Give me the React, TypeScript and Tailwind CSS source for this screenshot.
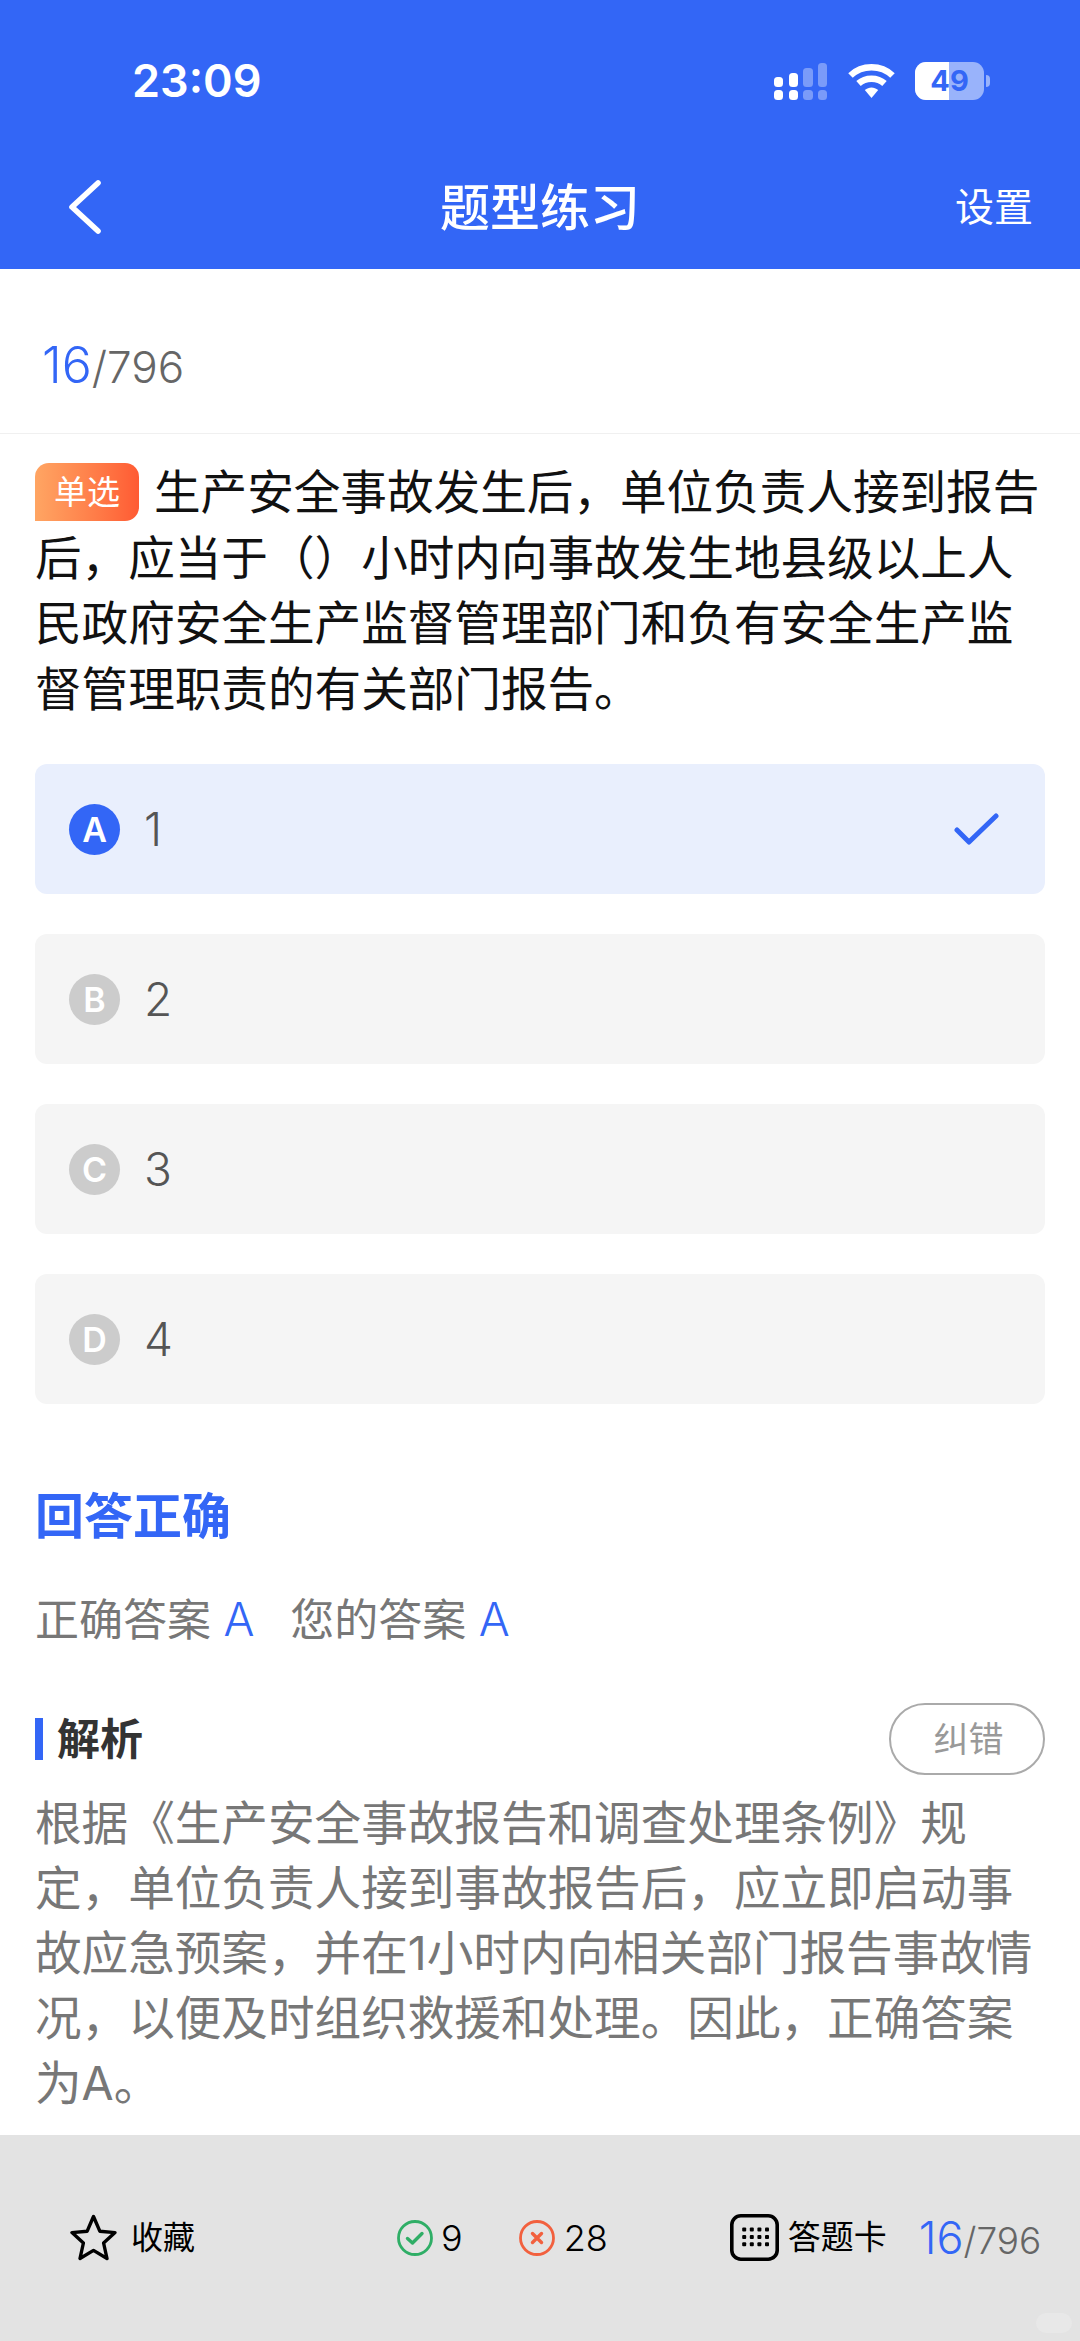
const font = "font-[Inter,'Noto_Sans_CJK_SC',sans-serif]";

const options = [
  { letter: "A", label: "1", selected: true },
  { letter: "B", label: "2", selected: false },
  { letter: "C", label: "3", selected: false },
  { letter: "D", label: "4", selected: false },
];

function Signal() {
  return (
    <svg width="54" height="37" viewBox="0 0 54 37" fill="#fff">
      <rect x="0" y="14" width="9" height="10" rx="3.5" />
      <rect x="15" y="10" width="9" height="14" rx="3.5" />
      <rect x="29" y="5" width="10" height="19" rx="3.5" opacity="0.35" />
      <rect x="44" y="0" width="9" height="24" rx="3.5" opacity="0.35" />
      <rect x="0" y="27" width="9" height="10" rx="3.5" />
      <rect x="15" y="27" width="9" height="10" rx="3.5" />
      <rect x="29" y="27" width="10" height="10" rx="3.5" opacity="0.35" />
      <rect x="44" y="27" width="9" height="10" rx="3.5" opacity="0.35" />
    </svg>
  );
}

function Wifi() {
  return (
    <svg width="47" height="36" viewBox="0 0 47 36" fill="none" stroke="#fff" strokeWidth="6.5">
      <path d="M2.5 12.5C14 1.5 33 1.5 44.5 12.5" />
      <path d="M10.5 20.5C17.5 14 29.5 14 36.5 20.5" />
      <path d="M16.8 27L23.5 35L30.2 27C26 23.5 21 23.5 16.8 27Z" fill="#fff" stroke="none" />
    </svg>
  );
}

function Battery() {
  return (
    <div className="flex items-center gap-[2px]">
      <div className="relative h-[38px] w-[69px] overflow-hidden rounded-[11px] bg-[#99b3fb]">
        <div className="absolute inset-y-0 left-0 w-[34px] bg-white" />
        <div className="absolute inset-0 flex items-center justify-center text-[29px] font-bold text-[#3366f6]">
          49
        </div>
      </div>
      <div className="h-[12px] w-[4px] rounded-r-full bg-[#99b3fb]" />
    </div>
  );
}

function Star() {
  return (
    <svg width="47" height="47" viewBox="0 0 47 47" fill="none" stroke="#000" strokeWidth="3.4" strokeLinejoin="round">
      <path d="M23.5 2.5L29.8 17.2L45 18.6L33.6 29L37 44.5L23.5 36.4L10 44.5L13.4 29L2 18.6L17.2 17.2Z" />
    </svg>
  );
}

function CardIcon() {
  const dots = [];
  for (let r = 0; r < 3; r++) {
    for (let c = 0; c < 4; c++) {
      dots.push(<rect key={`${r}-${c}`} x={12.2 + c * 7.6} y={13.5 + r * 7.4} width="4" height="4" rx="1" fill="#000" />);
    }
  }
  return (
    <svg width="49" height="47" viewBox="0 0 49 47" fill="none">
      <rect x="1.8" y="1.8" width="45.4" height="43.4" rx="9" stroke="#000" strokeWidth="3.6" />
      {dots}
    </svg>
  );
}

function Progress({ big, small }: { big: string; small: string }) {
  return (
    <div className="flex items-baseline font-light">
      <span className={`${big} text-[#3366f6]`}>16</span>
      <span className={`${small} text-[#666]`}>/796</span>
    </div>
  );
}

function Option({ letter, label, selected }: { letter: string; label: string; selected: boolean }) {
  return (
    <div className={`flex h-[130px] items-center rounded-[12px] pl-[34px] pr-[46px] ${selected ? "bg-[#e9effd]" : "bg-[#f5f5f5]"}`}>
      <div
        className={`flex h-[51px] w-[51px] items-center justify-center rounded-full text-[34px] font-semibold text-white ${selected ? "bg-[#3366f6]" : "bg-[#cccccc]"}`}
      >
        {letter}
      </div>
      <span className="ml-[24px] text-[46px] font-light text-[#555]">{label}</span>
      {selected && (
        <svg className="ml-auto" width="45" height="34" viewBox="0 0 45 34" fill="none" stroke="#3366f6" strokeWidth="5" strokeLinecap="round" strokeLinejoin="round">
          <path d="M3 18L15 30L42 4" />
        </svg>
      )}
    </div>
  );
}

export default function App() {
  return (
    <div className={`flex h-[2341px] w-[1080px] flex-col overflow-hidden bg-white ${font}`}>
      <header className="h-[269px] bg-[#3366f6] text-white">
        <div className="flex h-[162px] items-center pl-[132px] pr-[90px]">
          <span className="text-[45px] font-semibold">23:09</span>
          <div className="ml-auto flex items-center gap-[20px]">
            <Signal />
            <Wifi />
            <Battery />
          </div>
        </div>
        <div className="flex h-[90px] items-center pl-[68px] pr-[47px]">
          <svg width="36" height="56" viewBox="0 0 36 56" fill="none" stroke="#fff" strokeWidth="5.6" strokeLinecap="round" strokeLinejoin="round">
            <path d="M30 4L4 28L30 52" />
          </svg>
          <h1 className="ml-[336px] pt-[2px] text-[50px] font-medium">题型练习</h1>
          <span className="ml-auto text-[39px]">设置</span>
        </div>
      </header>

      <div className="flex h-[165px] items-center border-b border-[#f0f0f0] pl-[42px] pt-[28px]">
        <Progress big="text-[50px]" small="text-[44px]" />
      </div>

      <main className="px-[35px] pt-[26px]">
        <p className="text-[46.6px] leading-[65.5px] text-[#111]">
          <span className="mr-[15px] mt-[3px] inline-block h-[58px] w-[104px] rounded-[14px] rounded-bl-none bg-gradient-to-r from-[#ffa563] to-[#ff5a33] text-center align-top text-[33px] leading-[58px] text-white">
            单选
          </span>
          生产安全事故发生后，单位负责人接到报告后，应当于（）小时内向事故发生地县级以上人民政府安全生产监督管理部门和负有安全生产监督管理职责的有关部门报告。
        </p>

        <div className="mt-[42px] flex flex-col gap-[40px]">
          {options.map((o) => (
            <Option key={o.letter} {...o} />
          ))}
        </div>

        <h2 className="mt-[80px] text-[49px] font-bold leading-[66px] text-[#3366f6]">回答正确</h2>

        <div className="mt-[39px] flex gap-[36px] text-[44px] leading-[60px] text-[#777]">
          <span>
            正确答案 <span className="text-[46px] font-light text-[#3366f6]">A</span>
          </span>
          <span>
            您的答案 <span className="text-[46px] font-light text-[#3366f6]">A</span>
          </span>
        </div>

        <div className="mt-[53px] flex h-[72px] items-center justify-between">
          <div className="flex items-center gap-[14px]">
            <div className="h-[42px] w-[8px] bg-[#3366f6]" />
            <span className="text-[43px] font-bold text-[#333]">解析</span>
          </div>
          <div className="flex h-[72px] w-[156px] items-center justify-center rounded-full border-2 border-[#aaaaaa] pl-[3px] text-[35px] text-[#999]">
            纠错
          </div>
        </div>

        <p className="mt-[16px] text-[46.6px] leading-[65px] text-[#777]">
          根据《生产安全事故报告和调查处理条例》规定，单位负责人接到事故报告后，应立即启动事故应急预案，并在1小时内向相关部门报告事故情况，以便及时组织救援和处理。因此，正确答案为A。
        </p>
      </main>

      <footer className="relative mt-auto flex h-[206px] items-start bg-[#e3e3e3] pt-[79px]">
        <div className="ml-[70px] flex h-[47px] items-center gap-[14px] text-[32px] text-black">
          <Star />
          <span>收藏</span>
        </div>
        <div className="ml-[202px] flex h-[47px] items-center gap-[8px] text-[36px] font-light text-black">
          <svg width="36" height="36" viewBox="0 0 36 36" fill="none" stroke="#2fae66" strokeWidth="2.8">
            <circle cx="18" cy="18" r="16.5" />
            <path d="M10.5 18.5L15.5 23L25 13.5" strokeWidth="3.4" strokeLinecap="round" strokeLinejoin="round" />
          </svg>
          <span>9</span>
        </div>
        <div className="ml-[56px] flex h-[47px] items-center gap-[9px] text-[36px] font-light text-black">
          <svg width="36" height="36" viewBox="0 0 36 36" fill="none" stroke="#f2603e" strokeWidth="2.8">
            <circle cx="18" cy="18" r="16.5" />
            <path d="M13.5 13.5L22.5 22.5M22.5 13.5L13.5 22.5" strokeWidth="3.4" strokeLinecap="round" />
          </svg>
          <span>28</span>
        </div>
        <div className="ml-[122px] flex h-[47px] items-center gap-[9px] text-[33px] text-black">
          <CardIcon />
          <span>答题卡</span>
        </div>
        <div className="ml-[32px] flex h-[47px] items-center">
          <Progress big="text-[45px]" small="text-[37px]" />
        </div>
        <div className="absolute bottom-[8px] right-[8px] h-[20px] w-[36px] rounded-full bg-[#e8e8e8]" />
      </footer>
    </div>
  );
}
